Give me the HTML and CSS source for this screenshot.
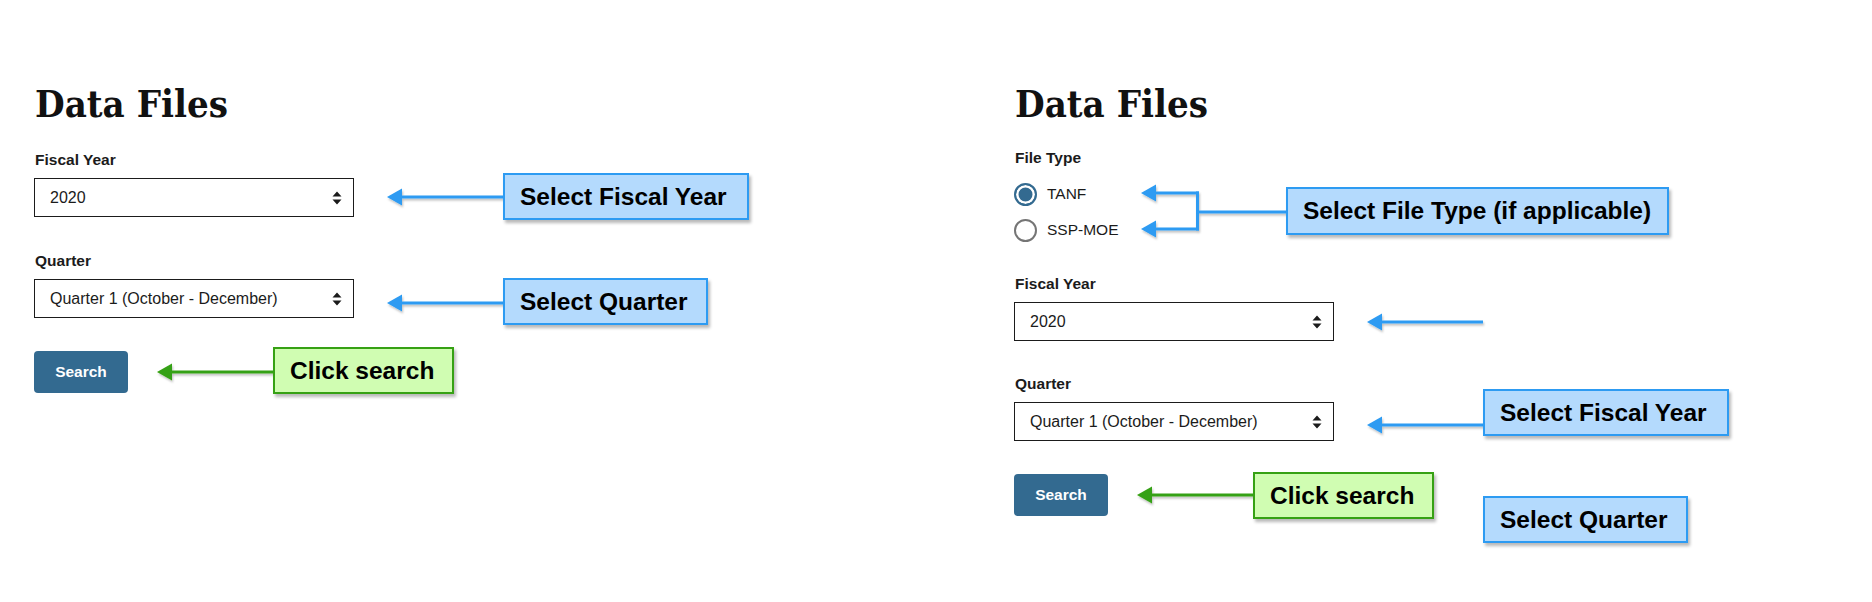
FILE: index.html
```html
<!DOCTYPE html>
<html lang="en">
<head>
<meta charset="utf-8">
<title>Data Files</title>
<link rel="stylesheet" href="styles.css">
</head>
<body>
<div class="page">
  <section class="panel panel-left">
    <h1 class="title">Data Files</h1>
    <div class="field">
      <div class="label">Fiscal Year</div>
      <div class="select"><span class="select-text">2020</span>
        <svg class="caret" width="10" height="14" viewBox="0 0 10 14"><path d="M5 0.5 L9.5 5.5 L0.5 5.5 Z M5 13.5 L9.5 8.5 L0.5 8.5 Z" fill="#1b1b1b"/></svg>
      </div>
    </div>
    <div class="field field-next">
      <div class="label">Quarter</div>
      <div class="select"><span class="select-text">Quarter 1 (October - December)</span>
        <svg class="caret" width="10" height="14" viewBox="0 0 10 14"><path d="M5 0.5 L9.5 5.5 L0.5 5.5 Z M5 13.5 L9.5 8.5 L0.5 8.5 Z" fill="#1b1b1b"/></svg>
      </div>
    </div>
    <button class="btn">Search</button>
  </section>

  <section class="panel panel-right">
    <h1 class="title">Data Files</h1>
    <div class="field field-type">
      <div class="label">File Type</div>
      <div class="radios">
        <div class="radio-row"><span class="radio radio-on"></span><span class="radio-label">TANF</span></div>
        <div class="radio-row"><span class="radio"></span><span class="radio-label">SSP-MOE</span></div>
      </div>
    </div>
    <div class="field field-after-radio">
      <div class="label">Fiscal Year</div>
      <div class="select"><span class="select-text">2020</span>
        <svg class="caret" width="10" height="14" viewBox="0 0 10 14"><path d="M5 0.5 L9.5 5.5 L0.5 5.5 Z M5 13.5 L9.5 8.5 L0.5 8.5 Z" fill="#1b1b1b"/></svg>
      </div>
    </div>
    <div class="field field-next2">
      <div class="label">Quarter</div>
      <div class="select"><span class="select-text">Quarter 1 (October - December)</span>
        <svg class="caret" width="10" height="14" viewBox="0 0 10 14"><path d="M5 0.5 L9.5 5.5 L0.5 5.5 Z M5 13.5 L9.5 8.5 L0.5 8.5 Z" fill="#1b1b1b"/></svg>
      </div>
    </div>
    <button class="btn">Search</button>
  </section>
</div>

<svg class="arrows" width="1872" height="602" viewBox="0 0 1872 602">
  <defs>
    <filter id="sh" x="-10%" y="-50%" width="130%" height="250%">
      <feDropShadow dx="1" dy="2" stdDeviation="1.2" flood-color="#000" flood-opacity="0.25"/>
    </filter>
  </defs>
  <g fill="#2d9bf2" stroke="none" filter="url(#sh)">
    <rect x="400" y="195.5" width="104" height="3"/>
    <path d="M387 197 L402 188.5 L402 205.5 Z"/>
    <rect x="400" y="301.5" width="104" height="3"/>
    <path d="M387 303 L402 294.5 L402 311.5 Z"/>
    <rect x="1154" y="191.5" width="45" height="3"/>
    <path d="M1141 193 L1156 184.5 L1156 201.5 Z"/>
    <rect x="1154" y="227.5" width="45" height="3"/>
    <path d="M1141 229 L1156 220.5 L1156 237.5 Z"/>
    <rect x="1196" y="191.5" width="3" height="39"/>
    <rect x="1196" y="210.5" width="91" height="3"/>
    <rect x="1380" y="320.5" width="103" height="3"/>
    <path d="M1367 322 L1382 313.5 L1382 330.5 Z"/>
    <rect x="1380" y="423.5" width="104" height="3"/>
    <path d="M1367 425 L1382 416.5 L1382 433.5 Z"/>
  </g>
  <g fill="#36a114" stroke="none" filter="url(#sh)">
    <rect x="170" y="370.5" width="104" height="3"/>
    <path d="M157 372 L172 363.5 L172 380.5 Z"/>
    <rect x="1150" y="493.5" width="104" height="3"/>
    <path d="M1137 495 L1152 486.5 L1152 503.5 Z"/>
  </g>
</svg>

<div class="callout callout-blue c-l-fy">Select Fiscal Year</div>
<div class="callout callout-blue c-l-q">Select Quarter</div>
<div class="callout callout-green c-l-s">Click search</div>
<div class="callout callout-blue c-r-ft">Select File Type (if applicable)</div>
<div class="callout callout-blue c-r-fy">Select Fiscal Year</div>
<div class="callout callout-green c-r-s">Click search</div>
<div class="callout callout-blue c-r-q">Select Quarter</div>
</body>
</html>
```

FILE: styles.css
```css
html, body {
  margin: 0;
  padding: 0;
  background: #ffffff;
}
body {
  width: 1872px;
  height: 602px;
  position: relative;
  overflow: hidden;
  font-family: "Liberation Sans", Arial, sans-serif;
  color: #1b1b1b;
}
.page {
  display: flex;
  flex-direction: row;
}
.panel {
  display: flex;
  flex-direction: column;
  align-items: flex-start;
  padding-left: 34px;
  padding-top: 81px;
  box-sizing: border-box;
}
.panel-left { width: 980px; }
.panel-right { flex: 1; }

.title {
  margin: 0 0 0 1px;
  font-family: "DejaVu Serif", "Liberation Serif", serif;
  font-weight: bold;
  font-stretch: condensed;
  font-size: 38px;
  line-height: 45px;
  color: #111;
  letter-spacing: 0;
}

.field {
  display: flex;
  flex-direction: column;
  margin-top: 24px;
}
.panel-right .field-type { margin-top: 22px; }
.field-next { margin-top: 34px; }
.field-after-radio { margin-top: 26px; }
.field-next2 { margin-top: 33px; }

.label {
  font-weight: bold;
  font-size: 15.5px;
  line-height: 20px;
  margin-left: 1px;
  margin-bottom: 8px;
  color: #1b1b1b;
}

.select {
  width: 320px;
  height: 39px;
  box-sizing: border-box;
  border: 1px solid #1b1b1b;
  display: flex;
  align-items: center;
  justify-content: space-between;
  padding: 0 11px 0 15px;
  background: #fff;
}
.select-text {
  font-size: 16px;
  line-height: 20px;
  color: #1b1b1b;
}
.caret { display: block; }

.btn {
  margin-top: 33px;
  width: 94px;
  height: 42px;
  border: none;
  border-radius: 4px;
  background: #336a90;
  color: #ffffff;
  font-family: "Liberation Sans", Arial, sans-serif;
  font-weight: bold;
  font-size: 15.5px;
  padding: 0;
  cursor: pointer;
}

.radios {
  display: flex;
  flex-direction: column;
}
.radio-row {
  height: 36px;
  display: flex;
  align-items: center;
  gap: 10px;
}
.radio {
  width: 23px;
  height: 23px;
  box-sizing: border-box;
  border-radius: 50%;
  border: 2px solid #757575;
  background: #fff;
}
.radio-on {
  border-color: #336a90;
  background: #336a90;
  box-shadow: inset 0 0 0 2.5px #ffffff;
}
.radio-label {
  font-size: 15.5px;
  line-height: 20px;
  color: #1b1b1b;
}

.arrows {
  position: absolute;
  left: 0;
  top: 0;
  pointer-events: none;
}

.callout {
  position: absolute;
  box-sizing: border-box;
  height: 47px;
  display: flex;
  align-items: center;
  padding: 0 15px;
  font-family: "Liberation Sans", Arial, sans-serif;
  font-weight: bold;
  font-size: 24.5px;
  color: #000;
  white-space: nowrap;
  box-shadow: 2px 3px 3px rgba(0, 0, 0, 0.28);
}
.callout-blue {
  background: #b4dafd;
  border: 2px solid #2d9bf2;
}
.callout-green {
  background: #d0fdb2;
  border: 2px solid #36a114;
}
.c-l-fy { left: 503px; top: 173px; width: 246px; }
.c-l-q  { left: 503px; top: 278px; width: 205px; }
.c-l-s  { left: 273px; top: 347px; width: 181px; }
.c-r-ft { left: 1286px; top: 187px; width: 383px; height: 48px; }
.c-r-fy { left: 1483px; top: 389px; width: 246px; }
.c-r-s  { left: 1253px; top: 472px; width: 181px; }
.c-r-q  { left: 1483px; top: 496px; width: 205px; }
```
